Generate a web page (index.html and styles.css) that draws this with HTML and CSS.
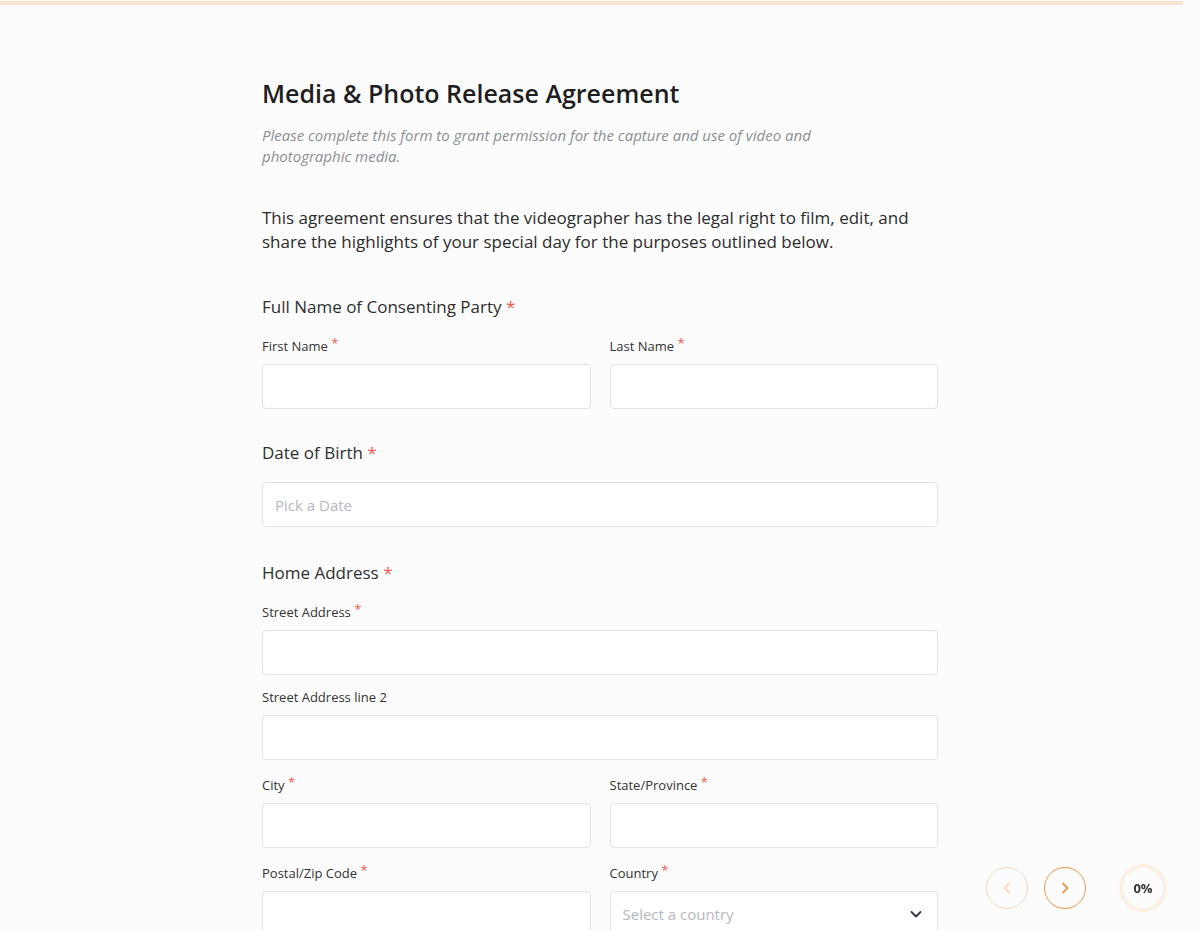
FILE: index.html
```html
<!DOCTYPE html>
<html lang="en">
<head>
<meta charset="utf-8">
<title>Media &amp; Photo Release Agreement</title>
<link rel="stylesheet" href="styles.css">
</head>
<body>
<div class="topbar"></div>
<main class="form">
  <h1 class="title">Media &amp; Photo Release Agreement</h1>
  <p class="subtitle">Please complete this form to grant permission for the capture and use of video and photographic media.</p>
  <p class="intro">This agreement ensures that the videographer has the legal right to film, edit, and share the highlights of your special day for the purposes outlined below.</p>

  <section class="group">
    <h2 class="group-label">Full Name of Consenting Party <span class="req">*</span></h2>
    <div class="row two">
      <div class="field">
        <label class="field-label">First Name <span class="req">*</span></label>
        <input class="input" type="text">
      </div>
      <div class="field">
        <label class="field-label">Last Name <span class="req">*</span></label>
        <input class="input" type="text">
      </div>
    </div>
  </section>

  <section class="group group-single">
    <h2 class="group-label">Date of Birth <span class="req">*</span></h2>
    <input class="input" type="text" placeholder="Pick a Date">
  </section>

  <section class="group">
    <h2 class="group-label">Home Address <span class="req">*</span></h2>
    <div class="stack">
      <div class="field">
        <label class="field-label">Street Address <span class="req">*</span></label>
        <input class="input" type="text">
      </div>
      <div class="field">
        <label class="field-label">Street Address line 2</label>
        <input class="input" type="text">
      </div>
      <div class="row two">
        <div class="field">
          <label class="field-label">City <span class="req">*</span></label>
          <input class="input" type="text">
        </div>
        <div class="field">
          <label class="field-label">State/Province <span class="req">*</span></label>
          <input class="input" type="text">
        </div>
      </div>
      <div class="row two">
        <div class="field">
          <label class="field-label">Postal/Zip Code <span class="req">*</span></label>
          <input class="input" type="text">
        </div>
        <div class="field">
          <label class="field-label">Country <span class="req">*</span></label>
          <div class="select">
            <span class="select-placeholder">Select a country</span>
            <svg class="chev-down" width="14" height="14" viewBox="0 0 14 14"><path d="M2.5 5l4.5 4.5L11.5 5" fill="none" stroke="#2f3540" stroke-width="1.8" stroke-linecap="round" stroke-linejoin="round"/></svg>
          </div>
        </div>
      </div>
    </div>
  </section>
</main>

<nav class="pager">
  <button class="nav-btn is-disabled" type="button" aria-label="Previous">
    <svg width="16" height="16" viewBox="0 0 16 16"><path d="M10 3.5L5.5 8l4.5 4.5" fill="none" stroke="currentColor" stroke-width="1.8" stroke-linecap="round" stroke-linejoin="round"/></svg>
  </button>
  <button class="nav-btn" type="button" aria-label="Next">
    <svg width="16" height="16" viewBox="0 0 16 16"><path d="M6 3.5l4.5 4.5L6 12.5" fill="none" stroke="currentColor" stroke-width="1.8" stroke-linecap="round" stroke-linejoin="round"/></svg>
  </button>
  <div class="progress">0%</div>
</nav>
</body>
</html>
```

FILE: styles.css
```css
* { box-sizing: border-box; }

html, body {
  margin: 0;
  padding: 0;
  height: 100%;
  overflow: hidden;
}

body {
  background: #fcfcfc;
  font-family: "Open Sans", "Liberation Sans", sans-serif;
  color: #2b2b2b;
}

.topbar {
  width: 1183px;
  height: 4px;
  margin-top: 1px;
  background: #fbe4cf;
}

.form {
  width: 676px;
  margin: 0 auto;
  padding-top: 71px;
}

.title {
  margin: 0;
  font-size: 25px;
  font-weight: 600;
  line-height: 34px;
  color: #1e1e1e;
}

.subtitle {
  max-width: 600px;
  margin: 15px 0 0;
  font-size: 15px;
  font-style: italic;
  line-height: 21px;
  color: #8a8f94;
}

.intro {
  margin: 39px 0 0;
  font-size: 17px;
  line-height: 24px;
  color: #2b2b2b;
}

.group { margin-top: 41px; }
.group + .group { margin-top: 32px; }

.group-label {
  margin: 0 0 15px;
  font-size: 17px;
  font-weight: 400;
  line-height: 24px;
  color: #2f2f2f;
}

/* a group holding one bare input sits a touch looser */
.group-single { padding-bottom: 2px; }
.group-single .group-label { margin-bottom: 17px; }

.req { color: #ef5a50; }

/* required marker on small labels sits a little raised */
.field-label .req { vertical-align: 3px; }

.row.two {
  display: grid;
  grid-template-columns: 1fr 1fr;
  gap: 19px;
}

.stack {
  display: flex;
  flex-direction: column;
  gap: 13px;
}

.field-label {
  display: block;
  margin-bottom: 9px;
  font-size: 13px;
  line-height: 18px;
  color: #333;
}

.input, .select {
  display: block;
  width: 100%;
  height: 45px;
  padding: 0 12px;
  background: #fff;
  border: 1px solid #e2e3e5;
  border-radius: 4px;
  font-family: inherit;
  font-size: 15px;
  color: #333;
  outline: none;
}

.input::placeholder { color: #b4b8bf; }

.select {
  display: flex;
  align-items: center;
  justify-content: space-between;
}

.select-placeholder { color: #b4b8bf; }
.chev-down { margin-right: 2px; }

.pager {
  position: fixed;
  right: 33px;
  bottom: 18px;
  display: flex;
  align-items: center;
}

.nav-btn {
  width: 42px;
  height: 42px;
  margin-right: 16px;
  padding: 0;
  display: flex;
  align-items: center;
  justify-content: center;
  background: transparent;
  border: 1.5px solid #e9964f;
  border-radius: 50%;
  color: #e9964f;
}

.nav-btn.is-disabled { opacity: 0.35; }
.nav-btn + .nav-btn { margin-right: 33px; }

.progress {
  width: 48px;
  height: 48px;
  display: flex;
  align-items: center;
  justify-content: center;
  border: 4px solid #fcefe3;
  border-radius: 50%;
  font-size: 13px;
  font-weight: 700;
  color: #333;
}
```
